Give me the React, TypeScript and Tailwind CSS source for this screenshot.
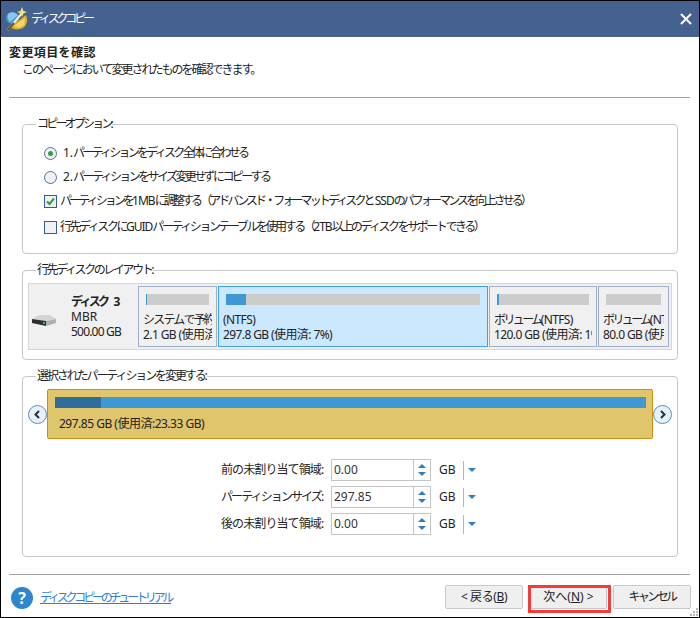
import React from 'react';

const FONT = "font-['Noto_Sans','Noto_Sans_CJK_JP',sans-serif]";

const Logo = () => (
  <svg width="24" height="24" viewBox="0 0 24 24">
    <ellipse cx="7.5" cy="11" rx="6.5" ry="6" fill="#3f9ad6" />
    <path d="M3 7 C6 4 10 5 13 8 L5 15 C3 13 2 10 3 7Z" fill="#8cc6e8" />
    <path d="M5 20 L21 8 C23 13 22 18 18 21 C14 23 8 23 5 20Z" fill="#e2b12c" />
    <path d="M9 19 L20 11 L19 18 C16 21 12 21 9 19Z" fill="#f6d964" />
    <path d="M3 23 L17 6" stroke="#f4f1e4" strokeWidth="2" />
    <path d="M3 23 L9 16" stroke="#6b4d18" strokeWidth="2" />
    <path d="M17 0 L18.5 4 L22 5 L18.5 6.5 L17 10 L15.5 6.5 L12 5 L15.5 4Z" fill="#f7e27a" />
  </svg>
);

const Radio = ({ checked }: { checked?: boolean }) => (
  <span className="w-[13px] h-[13px] rounded-full border border-[#4d7398] bg-[#eef2f6] flex items-center justify-center shrink-0">
    {checked && <span className="w-[5px] h-[5px] rounded-full bg-[#2ca33c]" />}
  </span>
);

const Checkbox = ({ checked }: { checked?: boolean }) => (
  <span className="w-[13px] h-[13px] border border-[#2f5f8f] bg-[#f0f0f0] flex items-center justify-center shrink-0">
    {checked && (
      <svg width="11" height="11" viewBox="0 0 11 11">
        <path d="M2 5.5 L4.5 8 L9 2.5" fill="none" stroke="#2f9e3f" strokeWidth="2" />
      </svg>
    )}
  </span>
);

// latin runs stay readable inside the squeezed kana lines
const Latin = ({ children }: { children: React.ReactNode }) => (
  <span className="tracking-[-1px]">{children}</span>
);

const Partition = ({
  width,
  fill,
  name,
  size,
  selected,
}: {
  width: string;
  fill: string;
  name: React.ReactNode;
  size: string;
  selected?: boolean;
}) => (
  <div
    className={`${width} h-[61px] shrink-0 border whitespace-nowrap ${
      selected ? 'bg-[#cce8ff] border-[#3fa2ee]' : 'bg-[#f0f0f0] border-[#9fb0cc]'
    }`}
  >
    <div className="mx-[7px] h-[11px] mt-[7px] bg-[#cccccc]">
      <div className={`${fill} h-full bg-[#3f97d3]`} />
    </div>
    <div className="ml-[4px] mr-[4px] overflow-hidden mt-[7px] leading-[15px] tracking-[-0.6px]">
      <div>{name}</div>
      <div>{size}</div>
    </div>
  </div>
);

const Spinner = ({ label, value, labelClass }: { label: string; value: string; labelClass: string }) => (
  <div className="flex items-center h-[22px] mb-[5px]">
    <div className={`w-[110px] whitespace-nowrap ${labelClass}`}>{label}</div>
    <div className="w-[100px] h-[22px] border border-[#c4c4c4] flex">
      <div className="flex-1 pl-[2px] leading-[20px] text-[#333]">{value}</div>
      <div className="w-[17px] border-l border-[#c4c4c4] flex flex-col items-center justify-center gap-[4px]">
        <span className="w-0 h-0 border-x-[4px] border-x-transparent border-b-[4px] border-b-[#2f7fc0]" />
        <span className="w-0 h-0 border-x-[4px] border-x-transparent border-t-[4px] border-t-[#2f7fc0]" />
      </div>
    </div>
    <div className="w-[32px] pl-[8px]">GB</div>
    <div className="w-px h-[19px] bg-[#b5b5b5]" />
    <span className="ml-[4px] w-0 h-0 border-x-[4px] border-x-transparent border-t-[4px] border-t-[#2f7fc0]" />
  </div>
);

const Legend = ({ children, className }: { children: React.ReactNode; className: string }) => (
  <legend className={`ml-[13px] px-[1px] h-[14px] leading-[14px] ${className}`}>{children}</legend>
);

const NavButton = ({ dir }: { dir: 'left' | 'right' }) => (
  <span className="w-[19px] h-[19px] rounded-full border border-[#5d8db5] bg-[#e6f1fb] flex items-center justify-center shrink-0">
    <svg width="9" height="9" viewBox="0 0 9 9">
      <path
        d={dir === 'left' ? 'M6 1 L2.5 4.5 L6 8' : 'M3 1 L6.5 4.5 L3 8'}
        fill="none"
        stroke="#2b2f38"
        strokeWidth="2"
      />
    </svg>
  </span>
);

const FootButton = ({ children, className = '' }: { children: React.ReactNode; className?: string }) => (
  <div
    className={`h-[24px] rounded-[2px] border border-[#c8c8c8] bg-[#efefef] flex items-center justify-center whitespace-pre ${className}`}
  >
    {children}
  </div>
);

export default function App() {
  return (
    <div className={`relative w-[700px] h-[618px] overflow-hidden bg-white border border-black text-[12px] text-[#222] flex flex-col ${FONT}`}>
      <div className="h-[36px] shrink-0 bg-[#45618f] flex items-center pl-[4px] pr-[7px] text-white">
        <Logo />
        <span className="ml-[2px] tracking-[-3.2px]">ディスクコピー</span>
        <svg className="ml-auto" width="12" height="12" viewBox="0 0 12 12">
          <path d="M1 1 L11 11 M11 1 L1 11" stroke="white" strokeWidth="2" />
        </svg>
      </div>

      <div className="pl-[8px] pr-[9px] pt-[8px]">
        <div className="font-bold leading-[16px] tracking-[0.4px]">変更項目を確認</div>
        <div className="pl-[13px] leading-[18px] tracking-[-2px]">このページにおいて変更されたものを確認できます。</div>
        <div className="mt-[18px] h-px bg-[#a3a3a3]" />
      </div>

      <div className="px-[21px] pt-[19px] flex flex-col gap-[9px]">
        <fieldset className="h-[137px] border border-[#c6c6c6] rounded-[4px]">
          <Legend className="tracking-[-2.8px]">コピーオプション:</Legend>
          <div className="pl-[21px] pt-[14px] flex flex-col whitespace-pre">
            <label className="flex items-center gap-[6px] h-[16px] tracking-[-2.75px]">
              <Radio checked />
              <span><span className="tracking-normal">1.</span>パーティションをディスク全体に合わせる</span>
            </label>
            <label className="mt-[8px] flex items-center gap-[6px] h-[16px] tracking-[-2.6px]">
              <Radio />
              <span><span className="tracking-normal">2.</span>パーティションをサイズ変更せずにコピーする</span>
            </label>
            <label className="mt-[8px] flex items-center gap-[3px] h-[16px] tracking-[-2.9px]">
              <Checkbox checked />
              <span>パーティションを<Latin>1MB</Latin>に調整する（アドバンスド・フォーマットディスクと<Latin> SSD</Latin>のパフォーマンスを向上させる）</span>
            </label>
            <label className="mt-[10px] flex items-center gap-[3px] h-[16px] tracking-[-2.45px]">
              <Checkbox />
              <span>行先ディスクに<Latin>GUID</Latin>パーティションテーブルを使用する（<Latin>2TB</Latin>以上のディスクをサポートできる）</span>
            </label>
          </div>
        </fieldset>

        <fieldset className="h-[97px] border border-[#c6c6c6] rounded-[4px]">
          <Legend className="tracking-[-2.4px]">行先ディスクのレイアウト:</Legend>
          <div className="mx-[5px] mt-[6px] h-[67px] bg-[#f0f0f0] border border-[#d6d6d6] flex items-center px-[2px] gap-[1px]">
            <div className="w-[106px] h-[61px] shrink-0 flex items-center pl-[1px]">
              <svg width="24" height="11" viewBox="0 0 24 11" className="mt-[8px]">
                <path d="M7 0 H18 L24 4 L14 6 L0 4Z" fill="#d4d4d4" />
                <path d="M0 4 L14 6 V11 L0 8Z" fill="#2e2e2e" />
                <path d="M14 6 L24 4 V8 L14 11Z" fill="#b0b0b0" />
                <rect x="11" y="7" width="2" height="2" fill="#3fbf5f" />
              </svg>
              <div className="ml-[15px] leading-[15px] whitespace-nowrap">
                <div className="font-bold">
                  <span className="tracking-[-2.7px]">ディスク</span>
                  <span className="ml-[6px]">3</span>
                </div>
                <div>MBR</div>
                <div className="tracking-[-0.8px]">500.00 GB</div>
              </div>
            </div>
            <Partition width="w-[79px]" fill="w-[1px]" name={<span className="tracking-[-1.8px]">システムで予約済み</span>} size="2.1 GB (使用済: 5%)" />
            <Partition width="w-[270px]" fill="w-[20px]" name="(NTFS)" size="297.8 GB (使用済: 7%)" selected />
            <Partition width="w-[108px]" fill="w-[2px]" name={<><span className="tracking-[-2.6px]">ボリューム</span>(NTFS)</>} size="120.0 GB (使用済: 1%)" />
            <Partition width="w-[71px]" fill="w-0" name={<><span className="tracking-[-2.6px]">ボリューム</span>(NTFS)</>} size="80.0 GB (使用済: 1%)" />
          </div>
        </fieldset>

        <fieldset className="h-[188px] border border-[#c6c6c6] rounded-[4px] pt-[6px]">
          <Legend className="tracking-[-2.1px]">選択されたパーティションを変更する:</Legend>
          <div className="flex items-center justify-between pl-[5px] pr-[5px]">
            <NavButton dir="left" />
            <div className="flex-1 h-[50px] bg-[#dfc56c] border border-[#c98f10] rounded-[2px] pl-[7px] pr-[6px] pt-[7px]">
              <div className="h-[11px] bg-[#3f97d3]">
                <div className="w-[46px] h-full bg-[#2e6c99]" />
              </div>
              <div className="mt-[8px] pl-[4px] leading-[16px] tracking-[-0.5px]">297.85 GB (使用済:23.33 GB)</div>
            </div>
            <NavButton dir="right" />
          </div>
          <div className="mt-[20px] ml-[198px]">
            <Spinner label="前の未割り当て領域:" value="0.00" labelClass="tracking-[-0.9px]" />
            <Spinner label="パーティションサイズ:" value="297.85" labelClass="tracking-[-1.9px]" />
            <Spinner label="後の未割り当て領域:" value="0.00" labelClass="tracking-[-0.9px]" />
          </div>
        </fieldset>
      </div>

      <div className="mt-[17px] ml-[8px] mr-[9px] h-px bg-[#a3a3a3]" />

      <div className="flex items-center pl-[10px] pr-[8px] mt-[10px]">
        <span className="w-[22px] h-[22px] mt-[1px] rounded-full bg-[#2f86cc] text-white text-[16px] font-bold flex items-center justify-center">?</span>
        <span className="ml-[7px] mt-[1px] text-[#2f7fd8] underline tracking-[-3.2px]">ディスクコピーのチュートリアル</span>
        <FootButton className="ml-auto w-[78px] tracking-[-0.4px]">&lt; 戻る(<u>B</u>)</FootButton>
        <div className="relative ml-[7px]">
          <FootButton className="w-[77px]">次へ(<u>N</u>) &gt;</FootButton>
          <div className="absolute -left-[2px] -right-[4px] top-0 -bottom-[4px] border-[3px] border-[#f53a3a]" />
        </div>
        <FootButton className="ml-[6px] w-[78px] tracking-[-2.6px]">キャンセル</FootButton>
      </div>

      <svg className="absolute right-0 bottom-0" width="10" height="10" viewBox="0 0 10 10">
        <path d="M7 1h2v2H7zM4 4h2v2H4zM7 4h2v2H7zM1 7h2v2H1zM4 7h2v2H4zM7 7h2v2H7z" fill="#b5b5b5" />
      </svg>
    </div>
  );
}
